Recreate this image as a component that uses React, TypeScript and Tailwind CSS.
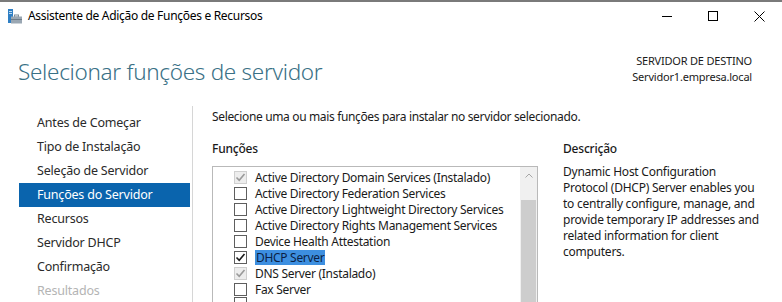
import React from "react";

const nav = [
  { label: "Antes de Começar" },
  { label: "Tipo de Instalação" },
  { label: "Seleção de Servidor" },
  { label: "Funções do Servidor", active: true },
  { label: "Recursos" },
  { label: "Servidor DHCP" },
  { label: "Confirmação" },
  { label: "Resultados", disabled: true },
];

type Role = { label: string; state: "installed" | "off" | "on" };

const roles: Role[] = [
  { label: "Active Directory Domain Services (Instalado)", state: "installed" },
  { label: "Active Directory Federation Services", state: "off" },
  { label: "Active Directory Lightweight Directory Services", state: "off" },
  { label: "Active Directory Rights Management Services", state: "off" },
  { label: "Device Health Attestation", state: "off" },
  { label: "DHCP Server", state: "on" },
  { label: "DNS Server (Instalado)", state: "installed" },
  { label: "Fax Server", state: "off" },
];

const description = [
  "Dynamic Host Configuration",
  "Protocol (DHCP) Server enables you",
  "to centrally configure, manage, and",
  "provide temporary IP addresses and",
  "related information for client",
  "computers.",
];

function WizardIcon() {
  return (
    <svg width="16" height="15" viewBox="0 0 16 15">
      <rect x="1" y="0" width="5" height="14" fill="#2f7fc4" />
      <rect x="2" y="2" width="3" height="1" fill="#bcd9f2" />
      <rect x="2" y="4" width="3" height="1" fill="#bcd9f2" />
      <rect x="7.5" y="6" width="4" height="2" fill="none" stroke="#7d8a96" strokeWidth="1" />
      <rect x="4" y="7.5" width="11" height="7" fill="#9aa7b3" />
      <rect x="4" y="10" width="11" height="1" fill="#6f7c88" />
    </svg>
  );
}

function Check({ state }: { state: Role["state"] }) {
  const installed = state === "installed";
  return (
    <span
      className={`flex h-[13px] w-[13px] shrink-0 items-center justify-center border ${
        installed ? "border-[#cfcfcf] bg-[#ededed]" : "border-[#5e5e5e] bg-white"
      }`}
    >
      {state !== "off" && (
        <svg width="11" height="11" viewBox="0 0 11 11">
          <path
            d="M1.5 5.5 L4.2 8.2 L9.5 2"
            fill="none"
            stroke={installed ? "#9a9a9a" : "#1a1a1a"}
            strokeWidth="1.6"
          />
        </svg>
      )}
    </span>
  );
}

export default function App() {
  return (
    <div
      className="h-[302px] w-[782px] overflow-hidden border-t-2 border-[#7a7a7a] bg-white text-[#1a1a1a]"
      style={{ fontFamily: '"Segoe UI", "Noto Sans", sans-serif' }}
    >
      {/* title bar */}
      <div className="flex h-[28px] items-center">
        <div className="flex items-center pl-[7px]">
          <WizardIcon />
          <span className="ml-[5px] text-[12px] tracking-[-0.3px] text-black">
            Assistente de Adição de Funções e Recursos
          </span>
        </div>
        <div className="ml-auto flex h-full">
          <button className="flex w-[46px] items-center justify-center">
            <span className="block h-px w-[10px] bg-black" />
          </button>
          <button className="flex w-[46px] items-center justify-center">
            <span className="block h-[10px] w-[10px] border border-black" />
          </button>
          <button className="flex w-[46px] items-center justify-center">
            <svg width="11" height="11" viewBox="0 0 11 11">
              <path d="M0.5 0.5 L10.5 10.5 M10.5 0.5 L0.5 10.5" stroke="#000" strokeWidth="1" />
            </svg>
          </button>
        </div>
      </div>

      {/* header */}
      <div className="flex items-start justify-between pl-[18px] pr-[30px] pt-[28px]">
        <h1 className="text-[22.5px] font-light leading-[28px] tracking-[-0.3px] text-[#3a7186]">
          Selecionar funções de servidor
        </h1>
        <div className="-mt-[5px] text-right text-[11px] leading-[16px] tracking-[-0.2px] text-[#1a1a1a]">
          <div>SERVIDOR DE DESTINO</div>
          <div>Servidor1.empresa.local</div>
        </div>
      </div>

      {/* body */}
      <div className="mt-[20px] flex">
        <nav className="w-[193px] border-r border-[#d6d6d6] pt-[5px]">
          {nav.map((n) => (
            <div
              key={n.label}
              className={`ml-[19px] mr-[2px] flex h-[24px] items-center pl-[18px] text-[12.5px] tracking-[-0.2px] ${
                n.active
                  ? "bg-[#0a64ad] text-white"
                  : n.disabled
                  ? "text-[#b4b4b4]"
                  : "text-[#2a2a2a]"
              }`}
            >
              {n.label}
            </div>
          ))}
        </nav>

        <div className="flex-1 pl-[19px]">
          <p className="mt-[3px] text-[12px] leading-[16px] tracking-[-0.35px]">
            Selecione uma ou mais funções para instalar no servidor selecionado.
          </p>
          <div className="mt-[16px] flex gap-[25px]">
            <div>
              <div className="text-[12px] font-medium leading-[16px] tracking-[-0.2px]">Funções</div>
              <div className="mt-[9px] flex h-[200px] w-[326px] border border-[#b9b9b9]">
                <ul className="flex-1 pl-[21px] pt-[2px]">
                  {roles.map((r) => (
                    <li key={r.label} className="flex h-[16px] items-center">
                      <Check state={r.state} />
                      <span
                        className={`ml-[8px] whitespace-nowrap text-[12px] leading-[15px] tracking-[-0.3px] ${
                          r.state === "on" ? "-ml-px bg-[#3d8fe0] pl-px pr-px text-[#0b1f45]" : ""
                        }`}
                      >
                        {r.label}
                      </span>
                    </li>
                  ))}
                  <li className="flex h-[6px] items-start overflow-hidden">
                    <span className="h-[13px] w-[13px] shrink-0 border border-[#5e5e5e]" />
                  </li>
                </ul>
                <div className="flex w-[17px] flex-col bg-[#f0f0f0]">
                  <div className="flex h-[33px] items-start justify-center pt-[6px]">
                    <svg width="8" height="5" viewBox="0 0 8 5">
                      <path d="M0.5 4.5 L4 1 L7.5 4.5" fill="none" stroke="#a6a6a6" strokeWidth="1" />
                    </svg>
                  </div>
                  <div className="mx-px flex-1 bg-[#cdcdcd]" />
                </div>
              </div>
            </div>
            <div className="w-[205px]">
              <div className="text-[12px] font-medium leading-[16px] tracking-[-0.2px]">Descrição</div>
              <p className="mt-[7px] text-[12px] leading-[16px] tracking-[-0.25px]">
                {description.map((line) => (
                  <span key={line} className="block whitespace-nowrap">
                    {line}
                  </span>
                ))}
              </p>
            </div>
          </div>
        </div>
      </div>
    </div>
  );
}
